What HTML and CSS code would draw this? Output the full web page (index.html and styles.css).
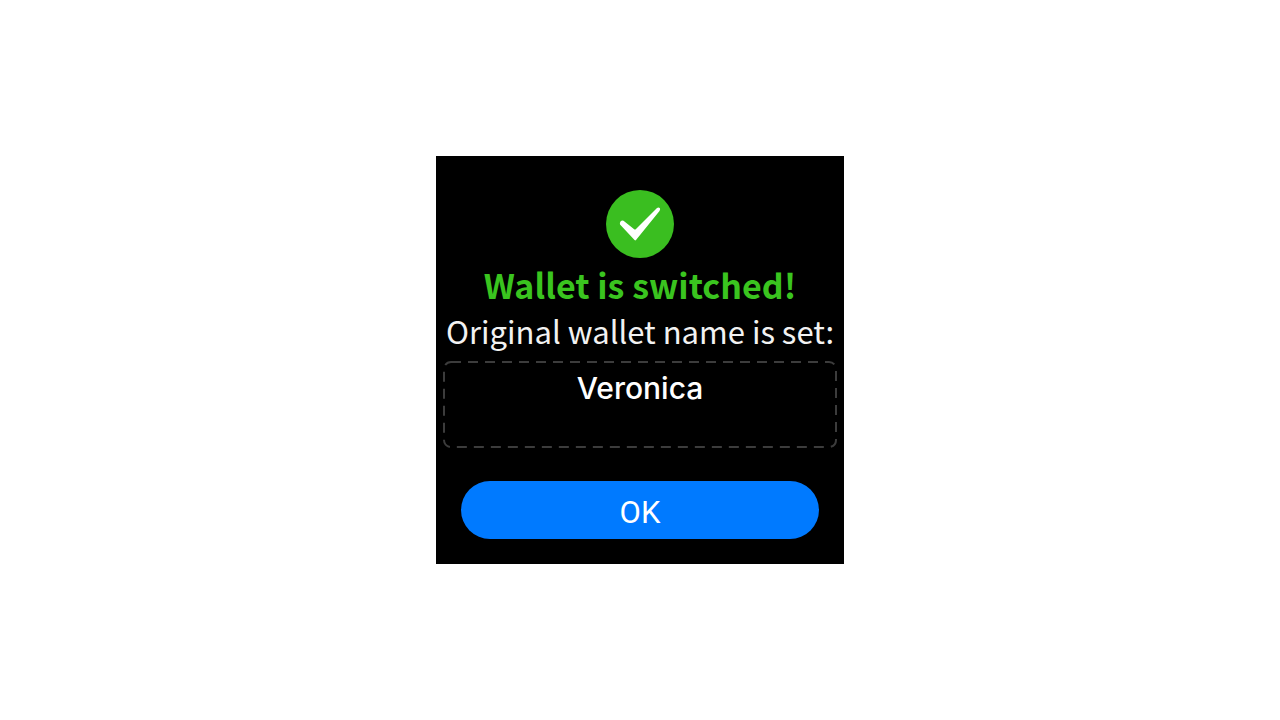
FILE: index.html
```html
<!DOCTYPE html>
<html lang="en">
<head>
    <meta charset="utf-8">
    <title>Wallet is switched</title>
    <link rel="stylesheet" href="styles.css">
</head>
<body>
    <main class="screen">
        <svg class="check-icon" viewBox="0 0 68 68" aria-hidden="true">
            <circle cx="34" cy="34" r="34" fill="#3abe20"/>
            <path d="M14 34.500 Q13.500 33 14.500 31.500 Q16 29.800 17.500 30.800 L28.500 39.500 Q29.200 39.800 30 39 L51 18 Q52.500 16.800 53.800 18 Q54.600 19 53.500 21 L30 50 Q29.300 50.800 28.500 50 Z" fill="#fff"/>
        </svg>
        <h1 class="title">Wallet is switched!</h1>
        <p class="message">Original wallet name is set:</p>
        <div class="name-box">
            <svg class="name-border" aria-hidden="true">
                <rect x="1" y="1" rx="7" ry="7"/>
            </svg>
            <span class="name">Veronica</span>
        </div>
        <button class="ok-button" type="button">OK</button>
    </main>
</body>
</html>
```

FILE: styles.css
```css
* {
    box-sizing: border-box;
}
body {
    margin: 0;
    min-height: 100vh;
    display: flex;
    align-items: center;
    justify-content: center;
    background-color: #fff;
    font-family: "Noto Sans CJK SC", sans-serif;
}
.screen {
    width: 100%;
    max-width: 408px;
    padding: 34px 7px 25px;
    display: flex;
    flex-direction: column;
    align-items: center;
    background-color: #000;
    color: #fff;
    text-align: center;
}
.check-icon {
    width: 68px;
    height: 68px;
}
.title {
    margin: 4px 0 0;
    font-size: 34px;
    line-height: 46px;
    font-weight: bold;
    color: #3ac41f;
}
.message {
    margin: 0;
    font-size: 31px;
    line-height: 46px;
    color: #f2f2f2;
    white-space: nowrap;
}
.name-box {
    position: relative;
    width: 100%;
    height: 87px;
    margin-top: 7px;
    padding-top: 9px;
}
.name-border {
    position: absolute;
    top: 0;
    left: 0;
    width: 100%;
    height: 100%;
}
/* dashed outline, 10px dash and 7px gap */
.name-border rect {
    width: calc(100% - 2px);
    height: calc(100% - 2px);
    fill: none;
    stroke: #3c3c3c;
    stroke-width: 2px;
    stroke-dasharray: 10 7;
}
.name {
    font-family: Inter, sans-serif;
    font-size: 30px;
    line-height: 36px;
    font-weight: 500;
}
.ok-button {
    align-self: stretch;
    height: 58px;
    margin: 33px 18px 0;
    padding: 4px 0 0;
    border: none;
    border-radius: 29px;
    background-color: #007aff;
    color: #fff;
    font-family: Roboto, Arial, sans-serif;
    font-size: 31px;
    cursor: pointer;
}
```
